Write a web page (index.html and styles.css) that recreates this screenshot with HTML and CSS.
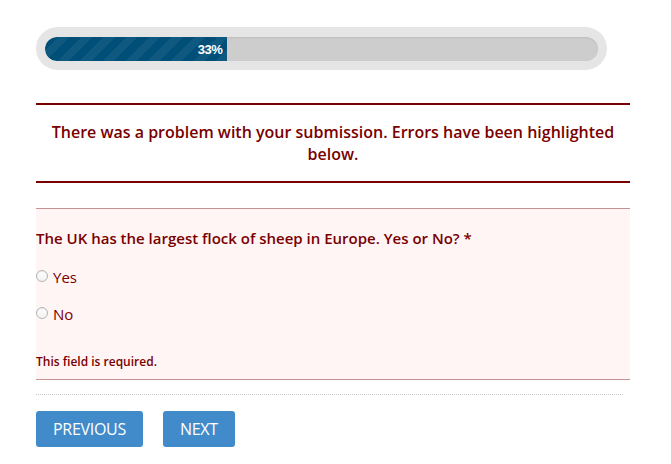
FILE: index.html
```html
<!DOCTYPE html>
<html>
  <head>
    <meta charset="utf-8" />
    <title>Quiz - page 1</title>
    <link rel="stylesheet" href="styles.css">
  </head>

  <body>
    <div class="wrap">
      <div class="progress">
        <div class="progress-track">
          <div class="progress-bar" style="width: 33%"><span>33%</span></div>
        </div>
      </div>

      <div class="validation-error">
        There was a problem with your submission. Errors have been highlighted below.
      </div>

      <form>
        <ul class="fields">
          <li class="field error">
            <label class="field-label">The UK has the largest flock of sheep in Europe. Yes or No? *</label>
            <ul class="choices">
              <li>
                <input type="radio" id="choice_yes" name="sheep" value="Yes" />
                <label for="choice_yes">Yes</label>
              </li>
              <li>
                <input type="radio" id="choice_no" name="sheep" value="No" />
                <label for="choice_no">No</label>
              </li>
            </ul>
            <div class="validation-message">This field is required.</div>
          </li>
        </ul>

        <div class="page-footer">
          <button type="button" class="button">Previous</button>
          <button type="submit" class="button">Next</button>
        </div>
      </form>
    </div>
  </body>
</html>
```

FILE: styles.css
```css
body {
  margin: 0;
  font-family: "Open Sans", sans-serif;
  color: #333;
  background: #fff;
}

.wrap {
  width: 594px;
  margin: 0 0 0 36px;
  padding-top: 27px;
}

/* barre de progression */
.progress {
  width: 571px;
  height: 43px;
  box-sizing: border-box;
  padding: 10px 9px 9px 9px;
  background: #e5e5e5;
  border-radius: 22px;
}

.progress-track {
  height: 24px;
  background: #cdcdcd;
  border-radius: 12px;
  overflow: hidden;
  box-shadow: inset 0 1px 2px rgba(0, 0, 0, 0.08);
}

.progress-bar {
  height: 100%;
  background-color: #004f78;
  background-image: repeating-linear-gradient(
    -45deg,
    rgba(255, 255, 255, 0.06) 0,
    rgba(255, 255, 255, 0.06) 8px,
    transparent 8px,
    transparent 16px
  );
  border-radius: 12px 0 0 12px;
  display: flex;
  align-items: center;
  justify-content: flex-end;
}

.progress-bar span {
  font-family: "Liberation Sans", Arial, sans-serif;
  font-weight: bold;
  font-size: 13px;
  color: #fff;
  padding-right: 5px;
  letter-spacing: -0.4px;
}

/* message d'erreur */
.validation-error {
  margin-top: 33px;
  border-top: 2px solid #790000;
  border-bottom: 2px solid #790000;
  padding: 16px 8px;
  text-align: center;
  font-size: 16px;
  font-weight: 600;
  line-height: 22px;
  color: #790000;
}

form {
  margin: 0;
}

.fields {
  list-style: none;
  margin: 25px 0 0 0;
  padding: 0;
}

.field.error {
  background: #fff5f5;
  border-top: 1px solid #c89393;
  border-bottom: 1px solid #c89393;
  padding: 18px 0 8px 0;
  color: #790000;
}

.field-label {
  display: block;
  font-size: 15px;
  font-weight: 600;
  line-height: 22px;
}

.choices {
  list-style: none;
  margin: 17px 0 0 0;
  padding: 0;
}

.choices li {
  display: flex;
  align-items: center;
  height: 22px;
  margin-bottom: 15px;
  font-size: 15px;
}

/* bouton radio gris clair */
.choices input {
  -webkit-appearance: none;
  appearance: none;
  box-sizing: border-box;
  width: 12px;
  height: 12px;
  margin: 0 5px 3px 0;
  border: 1px solid #b4b4b4;
  border-radius: 50%;
  background: linear-gradient(#fff, #f2f2f2);
  box-shadow: inset 0 1px 1px rgba(0, 0, 0, 0.08);
}

.validation-message {
  font-size: 12px;
  font-weight: 600;
  line-height: 18px;
  margin-top: 28px;
}

/* boutons */
.page-footer {
  margin-top: 14px;
  width: 587px;
  border-top: 1px dotted #c8c8c8;
  padding-top: 16px;
  display: flex;
  gap: 20px;
}

.button {
  font-family: "Open Sans", sans-serif;
  font-size: 16px;
  text-transform: uppercase;
  color: #fff;
  background: #428bca;
  border: none;
  border-radius: 3px;
  height: 36px;
  padding: 0 17px;
  letter-spacing: -0.3px;
}
```
